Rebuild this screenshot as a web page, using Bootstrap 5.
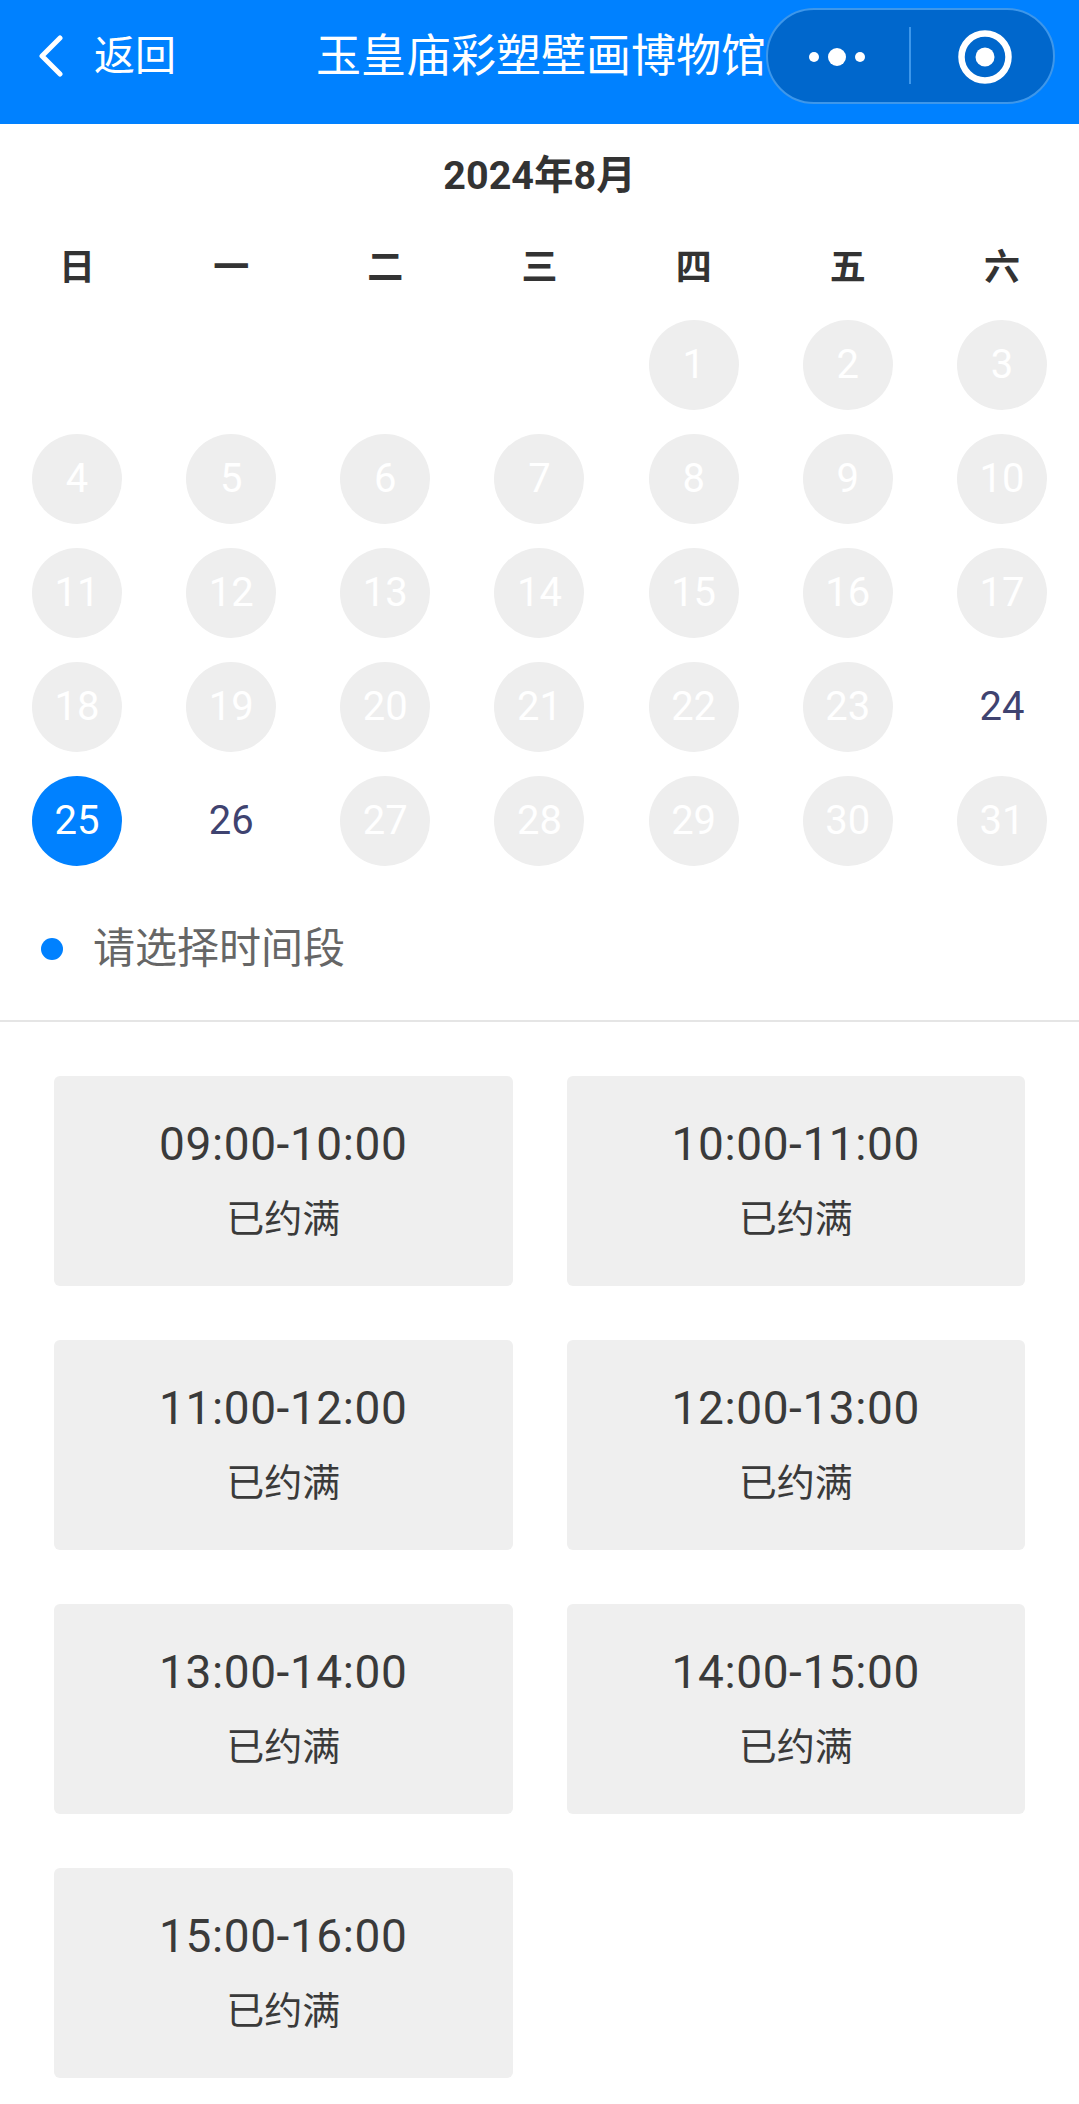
<!DOCTYPE html>
<html lang="zh"><head><meta charset="utf-8"><title>玉皇庙彩塑壁画博物馆</title>
<link href="https://cdn.jsdelivr.net/npm/bootstrap@5.3.0/dist/css/bootstrap.min.css" rel="stylesheet">
<style>
body{font-family:Roboto,"Noto Sans CJK SC",sans-serif;background:#fff;color:#333;}
.topbar{height:124px;background:#0081ff;color:#fff;padding:8px 24px 21px 38px;}
.back-link{font-size:41px;line-height:1;gap:30px;width:280px;padding-top:2px;}
.back-link svg{margin-top:-2px;}
.page-title{font-size:45px;line-height:1;white-space:nowrap;margin-left:-2px;padding-top:2px;}
.capsule{width:289px;height:96px;border-radius:48px;background:#0067cc;border:2px solid #3e97ea;}
.capsule-left{width:141px;padding-right:4px;padding-top:2px;}
.capsule-right{flex:1;padding-left:5px;padding-top:2px;}
.capsule-sep{width:2px;height:57px;background:#3e97ea;}
.month{font-size:39.5px;font-weight:700;line-height:50px;padding-top:27px;height:119px;}
.wk{font-size:36px;font-weight:700;line-height:50px;height:77px;}
.day-row{height:114px;}
.day{width:90px;height:90px;font-size:40px;color:#3f4370;}
.day.off{background:#eee;color:#fff;}
.day.on{background:#0081ff;color:#fff;}
.legend{height:73px;padding-left:41px;font-size:42px;color:#666;line-height:1;gap:30px;margin-top:22px;}
.dot{width:22px;height:22px;background:#0081ff;}
.rule{height:2px;background:#e5e5e5;margin-top:35px;}
.slots{display:grid;grid-template-columns:1fr 1fr;gap:54px;padding:54px 54px 0;}
.slot{height:210px;background:#efefef;border-radius:6px;padding-bottom:4px;}
.slot-time{font-size:46px;line-height:1;color:#3a3a3a;letter-spacing:.6px;}
.slot-note{font-size:38px;line-height:1;margin-top:33px;color:#3a3a3a;}
</style></head><body>
<header class="topbar d-flex align-items-center">
<div class="back-link d-flex align-items-center"><svg width="26" height="42" viewBox="0 0 26 42"><path d="M22 3 4 21l18 18" fill="none" stroke="#fff" stroke-width="5" stroke-linecap="round" stroke-linejoin="round"/></svg><span>返回</span></div>
<div class="page-title flex-grow-1">玉皇庙彩塑壁画博物馆</div>
<div class="capsule d-flex align-items-center flex-shrink-0">
<div class="capsule-left d-flex justify-content-center"><svg width="62" height="20" viewBox="0 0 62 20"><circle cx="8" cy="10" r="5" fill="#fff"/><circle cx="31" cy="10" r="9" fill="#fff"/><circle cx="54" cy="10" r="5" fill="#fff"/></svg></div>
<div class="capsule-sep"></div>
<div class="capsule-right d-flex justify-content-center"><svg width="54" height="54" viewBox="0 0 54 54"><circle cx="27" cy="27" r="23.5" fill="none" stroke="#fff" stroke-width="6.5"/><circle cx="27" cy="27" r="9.5" fill="#fff"/></svg></div>
</div>
</header>
<div class="month text-center">2024年8月</div>
<div class="row g-0 wk text-center"><div class="col">日</div><div class="col">一</div><div class="col">二</div><div class="col">三</div><div class="col">四</div><div class="col">五</div><div class="col">六</div></div>
<div id="cal">
<div class="row g-0 day-row"><div class="col"></div><div class="col"></div><div class="col"></div><div class="col"></div>
<div class="col d-flex justify-content-center"><div class="day off rounded-circle d-flex align-items-center justify-content-center">1</div></div>
<div class="col d-flex justify-content-center"><div class="day off rounded-circle d-flex align-items-center justify-content-center">2</div></div>
<div class="col d-flex justify-content-center"><div class="day off rounded-circle d-flex align-items-center justify-content-center">3</div></div></div>
<div class="row g-0 day-row">
<div class="col d-flex justify-content-center"><div class="day off rounded-circle d-flex align-items-center justify-content-center">4</div></div>
<div class="col d-flex justify-content-center"><div class="day off rounded-circle d-flex align-items-center justify-content-center">5</div></div>
<div class="col d-flex justify-content-center"><div class="day off rounded-circle d-flex align-items-center justify-content-center">6</div></div>
<div class="col d-flex justify-content-center"><div class="day off rounded-circle d-flex align-items-center justify-content-center">7</div></div>
<div class="col d-flex justify-content-center"><div class="day off rounded-circle d-flex align-items-center justify-content-center">8</div></div>
<div class="col d-flex justify-content-center"><div class="day off rounded-circle d-flex align-items-center justify-content-center">9</div></div>
<div class="col d-flex justify-content-center"><div class="day off rounded-circle d-flex align-items-center justify-content-center">10</div></div></div>
<div class="row g-0 day-row">
<div class="col d-flex justify-content-center"><div class="day off rounded-circle d-flex align-items-center justify-content-center">11</div></div>
<div class="col d-flex justify-content-center"><div class="day off rounded-circle d-flex align-items-center justify-content-center">12</div></div>
<div class="col d-flex justify-content-center"><div class="day off rounded-circle d-flex align-items-center justify-content-center">13</div></div>
<div class="col d-flex justify-content-center"><div class="day off rounded-circle d-flex align-items-center justify-content-center">14</div></div>
<div class="col d-flex justify-content-center"><div class="day off rounded-circle d-flex align-items-center justify-content-center">15</div></div>
<div class="col d-flex justify-content-center"><div class="day off rounded-circle d-flex align-items-center justify-content-center">16</div></div>
<div class="col d-flex justify-content-center"><div class="day off rounded-circle d-flex align-items-center justify-content-center">17</div></div></div>
<div class="row g-0 day-row">
<div class="col d-flex justify-content-center"><div class="day off rounded-circle d-flex align-items-center justify-content-center">18</div></div>
<div class="col d-flex justify-content-center"><div class="day off rounded-circle d-flex align-items-center justify-content-center">19</div></div>
<div class="col d-flex justify-content-center"><div class="day off rounded-circle d-flex align-items-center justify-content-center">20</div></div>
<div class="col d-flex justify-content-center"><div class="day off rounded-circle d-flex align-items-center justify-content-center">21</div></div>
<div class="col d-flex justify-content-center"><div class="day off rounded-circle d-flex align-items-center justify-content-center">22</div></div>
<div class="col d-flex justify-content-center"><div class="day off rounded-circle d-flex align-items-center justify-content-center">23</div></div>
<div class="col d-flex justify-content-center"><div class="day rounded-circle d-flex align-items-center justify-content-center">24</div></div></div>
<div class="row g-0 day-row">
<div class="col d-flex justify-content-center"><div class="day on rounded-circle d-flex align-items-center justify-content-center">25</div></div>
<div class="col d-flex justify-content-center"><div class="day rounded-circle d-flex align-items-center justify-content-center">26</div></div>
<div class="col d-flex justify-content-center"><div class="day off rounded-circle d-flex align-items-center justify-content-center">27</div></div>
<div class="col d-flex justify-content-center"><div class="day off rounded-circle d-flex align-items-center justify-content-center">28</div></div>
<div class="col d-flex justify-content-center"><div class="day off rounded-circle d-flex align-items-center justify-content-center">29</div></div>
<div class="col d-flex justify-content-center"><div class="day off rounded-circle d-flex align-items-center justify-content-center">30</div></div>
<div class="col d-flex justify-content-center"><div class="day off rounded-circle d-flex align-items-center justify-content-center">31</div></div></div>
</div>
<div class="legend d-flex align-items-center"><span class="dot rounded-circle"></span><span>请选择时间段</span></div>
<div class="rule"></div>
<div class="slots">
<div class="slot d-flex flex-column align-items-center justify-content-center"><div class="slot-time">09:00-10:00</div><div class="slot-note">已约满</div></div>
<div class="slot d-flex flex-column align-items-center justify-content-center"><div class="slot-time">10:00-11:00</div><div class="slot-note">已约满</div></div>
<div class="slot d-flex flex-column align-items-center justify-content-center"><div class="slot-time">11:00-12:00</div><div class="slot-note">已约满</div></div>
<div class="slot d-flex flex-column align-items-center justify-content-center"><div class="slot-time">12:00-13:00</div><div class="slot-note">已约满</div></div>
<div class="slot d-flex flex-column align-items-center justify-content-center"><div class="slot-time">13:00-14:00</div><div class="slot-note">已约满</div></div>
<div class="slot d-flex flex-column align-items-center justify-content-center"><div class="slot-time">14:00-15:00</div><div class="slot-note">已约满</div></div>
<div class="slot d-flex flex-column align-items-center justify-content-center"><div class="slot-time">15:00-16:00</div><div class="slot-note">已约满</div></div>
</div>
</body></html>
